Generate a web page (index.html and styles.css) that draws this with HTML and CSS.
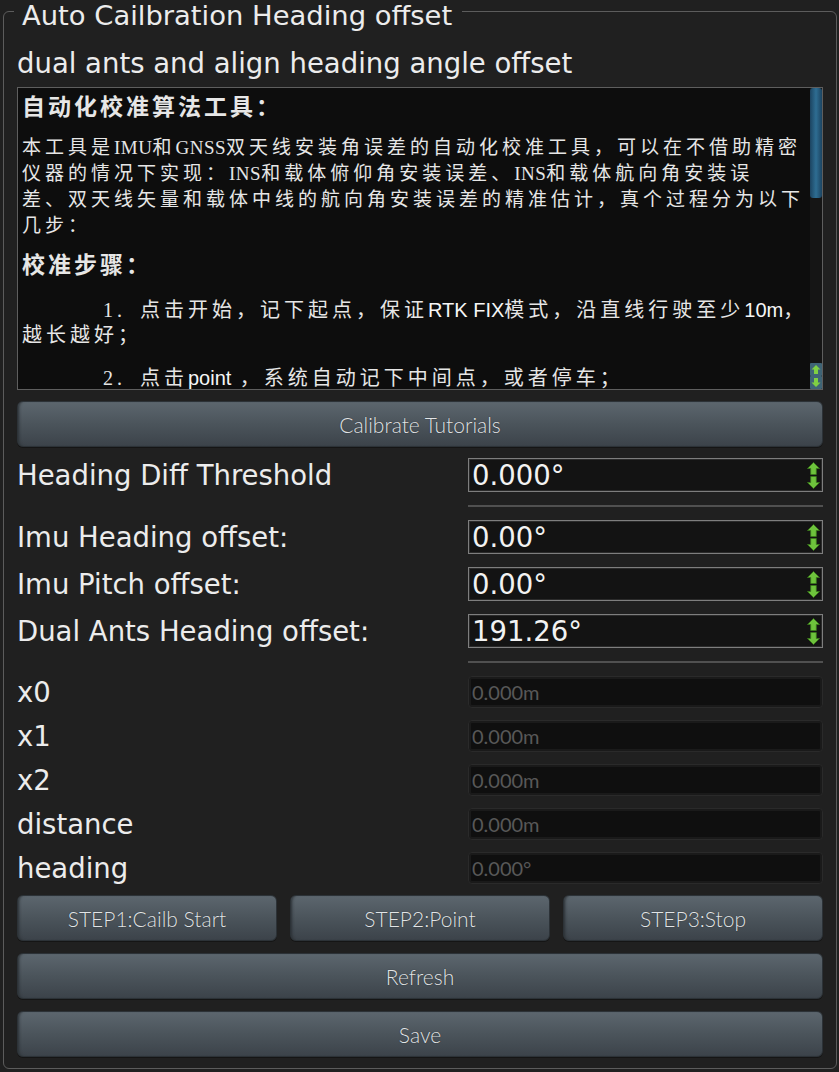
FILE: index.html
```html
<!DOCTYPE html>
<html lang="zh-CN">
<head>
<meta charset="utf-8">
<title>Auto Cailbration Heading offset</title>
<link rel="stylesheet" href="styles.css">
</head>
<body>
<fieldset class="group">
  <legend class="group-title">Auto Cailbration Heading offset</legend>
  <div class="subtitle">dual ants and align heading angle offset</div>

  <div class="textbox">
    <div class="tb-content">
      <div class="tb-h">自动化校准算法工具：</div>
      <p class="tb-p">本工具是<span class="ser">IMU</span>和<span class="ser">GNSS</span>双天线安装角误差的自动化校准工具，可以在不借助精密<br>仪器的情况下实现：<span class="ser">INS</span>和载体俯仰角安装误差、<span class="ser">INS</span>和载体航向角安装误<br>差、双天线矢量和载体中线的航向角安装误差的精准估计，真个过程分为以下<br>几步：</p>
      <div class="tb-h tb-h2">校准步骤：</div>
      <p class="tb-step tb-step1"><span class="num">1.</span>点击开始，记下起点，保证<span class="lat">RTK FIX</span>模式，沿直线行驶至少<span class="lat">10m</span>，<br>越长越好；</p>
      <p class="tb-step tb-step2"><span class="num">2.</span>点击<span class="lat">point</span> ，系统自动记下中间点，或者停车；</p>
    </div>
    <div class="vscroll">
      <div class="vthumb"></div>
      <div class="vtrack"></div>
      <div class="varrow">
        <svg width="12" height="13" viewBox="0 0 12 13"><rect x="0" y="0" width="12" height="13" rx="1" fill="#3f6476"/><polygon points="6,2 10.5,6.5 8,6.5 8,11 4,11 4,6.5 1.5,6.5" fill="#7fd043"/></svg>
      </div>
      <div class="varrow">
        <svg width="12" height="13" viewBox="0 0 12 13"><rect x="0" y="0" width="12" height="13" rx="1" fill="#3f6476"/><polygon points="6,11 10.5,6.5 8,6.5 8,2 4,2 4,6.5 1.5,6.5" fill="#7fd043"/></svg>
      </div>
    </div>
  </div>

  <button class="btn btn-wide btn-tutorial">Calibrate Tutorials</button>

  <div class="form spin-form">
    <div class="label">Heading Diff Threshold</div>
    <div class="spin"><span class="spin-val">0.000°</span>
      <span class="spin-arrows">
        <svg width="13" height="13" viewBox="0 0 13 13"><polygon points="6.5,0.5 12.5,6.5 9.3,6.5 9.3,12.5 3.7,12.5 3.7,6.5 0.5,6.5" fill="#6ec33c" stroke="#3a781b" stroke-width="0.8"/></svg>
        <svg width="13" height="13" viewBox="0 0 13 13"><polygon points="6.5,12.5 12.5,6.5 9.3,6.5 9.3,0.5 3.7,0.5 3.7,6.5 0.5,6.5" fill="#6ec33c" stroke="#3a781b" stroke-width="0.8"/></svg>
      </span>
    </div>
    <div class="sep"></div>

    <div class="label">Imu Heading offset:</div>
    <div class="spin"><span class="spin-val">0.00°</span>
      <span class="spin-arrows">
        <svg width="13" height="13" viewBox="0 0 13 13"><polygon points="6.5,0.5 12.5,6.5 9.3,6.5 9.3,12.5 3.7,12.5 3.7,6.5 0.5,6.5" fill="#6ec33c" stroke="#3a781b" stroke-width="0.8"/></svg>
        <svg width="13" height="13" viewBox="0 0 13 13"><polygon points="6.5,12.5 12.5,6.5 9.3,6.5 9.3,0.5 3.7,0.5 3.7,6.5 0.5,6.5" fill="#6ec33c" stroke="#3a781b" stroke-width="0.8"/></svg>
      </span>
    </div>

    <div class="label">Imu Pitch offset:</div>
    <div class="spin"><span class="spin-val">0.00°</span>
      <span class="spin-arrows">
        <svg width="13" height="13" viewBox="0 0 13 13"><polygon points="6.5,0.5 12.5,6.5 9.3,6.5 9.3,12.5 3.7,12.5 3.7,6.5 0.5,6.5" fill="#6ec33c" stroke="#3a781b" stroke-width="0.8"/></svg>
        <svg width="13" height="13" viewBox="0 0 13 13"><polygon points="6.5,12.5 12.5,6.5 9.3,6.5 9.3,0.5 3.7,0.5 3.7,6.5 0.5,6.5" fill="#6ec33c" stroke="#3a781b" stroke-width="0.8"/></svg>
      </span>
    </div>

    <div class="label">Dual Ants Heading offset:</div>
    <div class="spin"><span class="spin-val">191.26°</span>
      <span class="spin-arrows">
        <svg width="13" height="13" viewBox="0 0 13 13"><polygon points="6.5,0.5 12.5,6.5 9.3,6.5 9.3,12.5 3.7,12.5 3.7,6.5 0.5,6.5" fill="#6ec33c" stroke="#3a781b" stroke-width="0.8"/></svg>
        <svg width="13" height="13" viewBox="0 0 13 13"><polygon points="6.5,12.5 12.5,6.5 9.3,6.5 9.3,0.5 3.7,0.5 3.7,6.5 0.5,6.5" fill="#6ec33c" stroke="#3a781b" stroke-width="0.8"/></svg>
      </span>
    </div>
    <div class="sep"></div>
  </div>

  <div class="form field-form">
    <div class="label">x0</div>
    <div class="field">0.000m</div>
    <div class="label">x1</div>
    <div class="field">0.000m</div>
    <div class="label">x2</div>
    <div class="field">0.000m</div>
    <div class="label">distance</div>
    <div class="field">0.000m</div>
    <div class="label">heading</div>
    <div class="field">0.000°</div>
  </div>

  <div class="step-row">
    <button class="btn">STEP1:Cailb Start</button>
    <button class="btn">STEP2:Point</button>
    <button class="btn">STEP3:Stop</button>
  </div>
  <button class="btn btn-wide btn-refresh">Refresh</button>
  <button class="btn btn-wide btn-save">Save</button>
</fieldset>
</body>
</html>
```

FILE: styles.css
```css
html, body {
  margin: 0;
  padding: 0;
}
body {
  width: 839px;
  height: 1072px;
  overflow: hidden;
  background: #202020;
  font-family: "DejaVu Sans", sans-serif;
  color: #ececec;
}

.group {
  box-sizing: border-box;
  margin: 0 2px 0 3px;
  padding: 25px 13px 0 13px;
  height: 1069px;
  min-width: 0;
  border: 1px solid #5c5c5c;
  border-radius: 6px;
  display: block;
}
.group-title {
  margin-left: -3px;
  padding: 9px 10px 0 8px;
  font-size: 27.4px;
  line-height: 13px;
  color: #ececec;
}

.subtitle {
  font-size: 27.5px;
  line-height: 32px;
  margin: 0 0 8px;
  color: #ececec;
}

/* rich text box */
.textbox {
  box-sizing: border-box;
  height: 303px;
  border: 1px solid #5e5e5e;
  background: #0d0d0d;
  display: flex;
}
.tb-content {
  flex: 1;
  overflow: hidden;
  padding: 2px 0 0 4px;
  white-space: nowrap;
  color: #e6e6e6;
  font-family: "Noto Sans CJK SC", sans-serif;
  letter-spacing: 4px;
}
.tb-h {
  font-weight: 700;
  font-size: 23px;
  line-height: 30px;
  letter-spacing: 3px;
  margin: 0 0 13px;
}
.tb-h2 {
  margin: 11px 0 0;
}
.tb-p {
  font-size: 19px;
  line-height: 26px;
  margin: 0;
}
.ser {
  font-family: "Liberation Serif", serif;
  letter-spacing: 0.5px;
  line-height: 0;
}
.tb-step {
  font-size: 20px;
  line-height: 25px;
  letter-spacing: 4px;
  margin: 0;
}
.tb-step1 { margin-top: 18px; }
.tb-step2 {
  margin-top: 21px;
  line-height: 20px;
}
.num {
  display: inline-block;
  margin-left: 81px;
  width: 37px;
  line-height: 0;
  font-family: "Liberation Serif", serif;
}
.lat {
  font-family: "Liberation Sans", sans-serif;
  font-size: 20px;
  letter-spacing: 0;
  line-height: 0;
  color: #f6f6f6;
}

.vscroll {
  width: 12px;
  display: flex;
  flex-direction: column;
  background: #151515;
}
.vthumb {
  height: 110px;
  border-radius: 3px;
  background: linear-gradient(90deg, #1c4461, #2e6d92 50%, #1c4461);
}
.vtrack {
  flex: 1;
}
.varrow {
  height: 13px;
}
.varrow svg { display: block; }

/* buttons */
.btn {
  box-sizing: border-box;
  display: block;
  height: 46px;
  padding: 0;
  border: 1px solid #2c3237;
  border-radius: 6px;
  background: linear-gradient(180deg, #5c666e 0%, #4b545b 50%, #3c434a 100%);
  box-shadow: inset 3px 0 3px -2px #2a2f33, 0 1px 0 #151515;
  color: #e2e5e7;
  font-family: "Lato", sans-serif;
  font-weight: 300;
  font-size: 21px;
  text-shadow: 0 0 1px #1d2226;
}
.btn-wide {
  width: 100%;
}
.btn-tutorial { margin-top: 11px; }
.btn-refresh { margin-top: 12px; }
.btn-save { margin-top: 12px; }

/* forms */
.form {
  display: grid;
  grid-template-columns: 451px 1fr;
  align-items: center;
}
.spin-form {
  margin-top: 11px;
  row-gap: 13px;
}
.field-form {
  margin-top: 13px;
  row-gap: 12px;
}
.label {
  font-size: 27.5px;
  line-height: 32px;
  color: #ececec;
  white-space: nowrap;
}
.spin {
  box-sizing: border-box;
  height: 34px;
  border: 1px solid #7e7e7e;
  box-shadow: inset 0 0 0 1px #2b2b2b;
  background: #131313;
  display: flex;
  align-items: center;
  padding: 0 2px 0 3px;
}
.spin-val {
  flex: 1;
  font-size: 27.5px;
  line-height: 32px;
  color: #f2f2f2;
}
.spin-arrows {
  display: flex;
  flex-direction: column;
  gap: 1px;
}
.spin-arrows svg { display: block; }

.sep {
  grid-column: 2;
  height: 2px;
  background: #505050;
}

.field {
  box-sizing: border-box;
  height: 32px;
  border: 1px solid #2a2a2a;
  border-radius: 4px;
  background: #0f0f0f;
  box-shadow: inset 0 0 0 2px #1a1a1a;
  padding-left: 3px;
  font-family: "Lato", sans-serif;
  font-size: 20px;
  line-height: 30px;
  color: #585858;
}

.step-row {
  margin-top: 11px;
  display: grid;
  grid-template-columns: 1fr 1fr 1fr;
  column-gap: 13px;
}
```
